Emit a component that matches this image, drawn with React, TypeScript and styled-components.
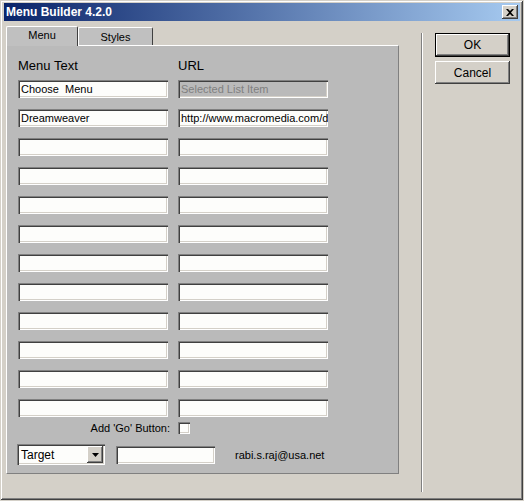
import React from 'react'
import styled, { createGlobalStyle } from 'styled-components'

const GlobalStyle = createGlobalStyle`
    html, body {
        margin: 0;
        padding: 0;
        background: #d4d0c8;
    }
    body {
        font-family: "Liberation Sans", Arial, sans-serif;
    }
`

const sunken = `
    box-shadow: inset 1px 1px 0 #808080, inset 2px 2px 0 #404040,
        inset -1px -1px 0 #ffffff, inset -2px -2px 0 #d4d0c8;
`

const raised = `
    box-shadow: inset -1px -1px 0 #404040, inset 1px 1px 0 #ffffff,
        inset -2px -2px 0 #808080, inset 2px 2px 0 #d4d0c8;
`

const Window = styled.div`
    width: 524px;
    height: 501px;
    box-sizing: border-box;
    background: #d4d0c8;
    border: 1px solid #d4d0c8;
    box-shadow: inset -1px -1px 0 #404040, inset 1px 1px 0 #ffffff,
        inset -2px -2px 0 #808080;
    padding: 2px 3px 3px 3px;
    display: flex;
    flex-direction: column;
`

const TitleBar = styled.div`
    height: 18px;
    background: linear-gradient(to right, #0a246a, #a6caf0);
    display: flex;
    align-items: center;
    justify-content: space-between;
    padding: 0 2px 0 2px;
    color: #ffffff;
    font-weight: bold;
    font-size: 12px;
`

const CloseButton = styled.div`
    width: 16px;
    height: 14px;
    background: #d4d0c8;
    ${raised}
    display: flex;
    align-items: center;
    justify-content: center;
`

const Body = styled.div`
    flex: 1;
    display: flex;
    padding: 4px 0 0 2px;
`

const LeftArea = styled.div`
    display: flex;
    flex-direction: column;
    width: 393px;
`

const TabRow = styled.div`
    display: flex;
    align-items: flex-end;
    height: 20px;
`

const Tab = styled.div<{ $active?: boolean }>`
    height: ${({ $active }) => ($active ? 20 : 18)}px;
    width: ${({ $active }) => ($active ? 72 : 75)}px;
    box-sizing: border-box;
    background: #c0c0c0;
    border-top: 1px solid #ffffff;
    border-left: 1px solid #ffffff;
    border-right: 1px solid #404040;
    border-radius: 2px 2px 0 0;
    font-size: 11px;
    color: #000;
    display: flex;
    justify-content: center;
    padding-top: ${({ $active }) => ($active ? 2 : 3)}px;
    margin-bottom: ${({ $active }) => ($active ? -1 : 0)}px;
    position: relative;
    z-index: ${({ $active }) => ($active ? 1 : 0)};
`

const Panel = styled.div`
    height: 429px;
    box-sizing: border-box;
    background: #bababa;
    border-top: 1px solid #ffffff;
    border-left: 1px solid #ffffff;
    border-right: 1px solid #808080;
    border-bottom: 1px solid #808080;
    padding: 12px 0 0 11px;
    display: flex;
    flex-direction: column;
`

const Columns = styled.div`
    display: grid;
    grid-template-columns: 150px 150px;
    column-gap: 10px;
    row-gap: 11px;
`

const ColumnLabel = styled.div`
    font-size: 13px;
    color: #000;
    height: 13px;
    line-height: 13px;
    margin-top: 1px;
    margin-bottom: -3px;
`

const TextBox = styled.div<{ $disabled?: boolean }>`
    height: 18px;
    box-sizing: border-box;
    background: ${({ $disabled }) => ($disabled ? '#bababa' : '#fdfdfb')};
    ${sunken}
    font-size: 11px;
    color: ${({ $disabled }) => ($disabled ? '#808080' : '#000')};
    padding: 3px 2px 0 3px;
    white-space: pre;
    overflow: hidden;
`

const GoRow = styled.div`
    display: flex;
    align-items: center;
    margin-top: 5px;
    height: 12px;
`

const GoLabel = styled.div`
    width: 152px;
    text-align: right;
    font-size: 11px;
    color: #000;
    padding-right: 8px;
`

const CheckBox = styled.div`
    width: 12px;
    height: 12px;
    box-sizing: border-box;
    background: #fdfdfb;
    ${sunken}
`

const BottomRow = styled.div`
    display: flex;
    align-items: center;
    margin-top: 10px;
`

const Select = styled.div`
    width: 88px;
    height: 21px;
    box-sizing: border-box;
    background: #fdfdfb;
    ${sunken}
    display: flex;
    align-items: center;
    justify-content: space-between;
    padding: 2px;
    margin-left: -1px;
`

const SelectText = styled.div`
    font-size: 12px;
    padding-left: 2px;
    color: #000;
`

const DropButton = styled.div`
    width: 16px;
    height: 17px;
    background: #d4d0c8;
    ${raised}
    display: flex;
    align-items: center;
    justify-content: center;
`

const SmallBox = styled(TextBox)`
    width: 99px;
    margin-left: 11px;
`

const Email = styled.div`
    font-size: 11px;
    color: #000;
    margin-left: 20px;
`

const Separator = styled.div`
    width: 1px;
    margin: 8px 0 5px 22px;
    background: #808080;
    border-right: 1px solid #ffffff;
`

const ButtonColumn = styled.div`
    display: flex;
    flex-direction: column;
    gap: 4px;
    margin-left: 12px;
    padding-top: 8px;
`

const Button = styled.div<{ $default?: boolean }>`
    width: 75px;
    height: ${({ $default }) => ($default ? 24 : 23)}px;
    box-sizing: border-box;
    background: #d4d0c8;
    border: ${({ $default }) => ($default ? '1px solid #000' : 'none')};
    ${raised}
    font-size: 12px;
    color: #000;
    display: flex;
    align-items: center;
    justify-content: center;
`

const rows: [string, string][] = [
    ['Choose  Menu', 'Selected List Item'],
    ['Dreamweaver', 'http://www.macromedia.com/dreamweaver'],
    ...Array.from({ length: 10 }, () => ['', ''] as [string, string]),
]

const App: React.FC = () => {
    return (
        <>
            <GlobalStyle />
            <Window>
                <TitleBar>
                    <span>Menu Builder 4.2.0</span>
                    <CloseButton>
                        <svg width="8" height="7" viewBox="0 0 8 7">
                            <path d="M0 0 L2 0 L4 2 L6 0 L8 0 L5 3.5 L8 7 L6 7 L4 5 L2 7 L0 7 L3 3.5 Z" fill="#000" />
                        </svg>
                    </CloseButton>
                </TitleBar>
                <Body>
                    <LeftArea>
                        <TabRow>
                            <Tab $active>Menu</Tab>
                            <Tab>Styles</Tab>
                        </TabRow>
                        <Panel>
                            <Columns>
                                <ColumnLabel>Menu Text</ColumnLabel>
                                <ColumnLabel>URL</ColumnLabel>
                                {rows.map(([text, url], i) => (
                                    <React.Fragment key={i}>
                                        <TextBox>{text}</TextBox>
                                        <TextBox $disabled={i === 0}>{url}</TextBox>
                                    </React.Fragment>
                                ))}
                            </Columns>
                            <GoRow>
                                <GoLabel>Add 'Go' Button:</GoLabel>
                                <CheckBox />
                            </GoRow>
                            <BottomRow>
                                <Select>
                                    <SelectText>Target</SelectText>
                                    <DropButton>
                                        <svg width="7" height="4" viewBox="0 0 7 4">
                                            <path d="M0 0 L7 0 L3.5 4 Z" fill="#000" />
                                        </svg>
                                    </DropButton>
                                </Select>
                                <SmallBox />
                                <Email>rabi.s.raj@usa.net</Email>
                            </BottomRow>
                        </Panel>
                    </LeftArea>
                    <Separator />
                    <ButtonColumn>
                        <Button $default>OK</Button>
                        <Button>Cancel</Button>
                    </ButtonColumn>
                </Body>
            </Window>
        </>
    )
}

export default App
